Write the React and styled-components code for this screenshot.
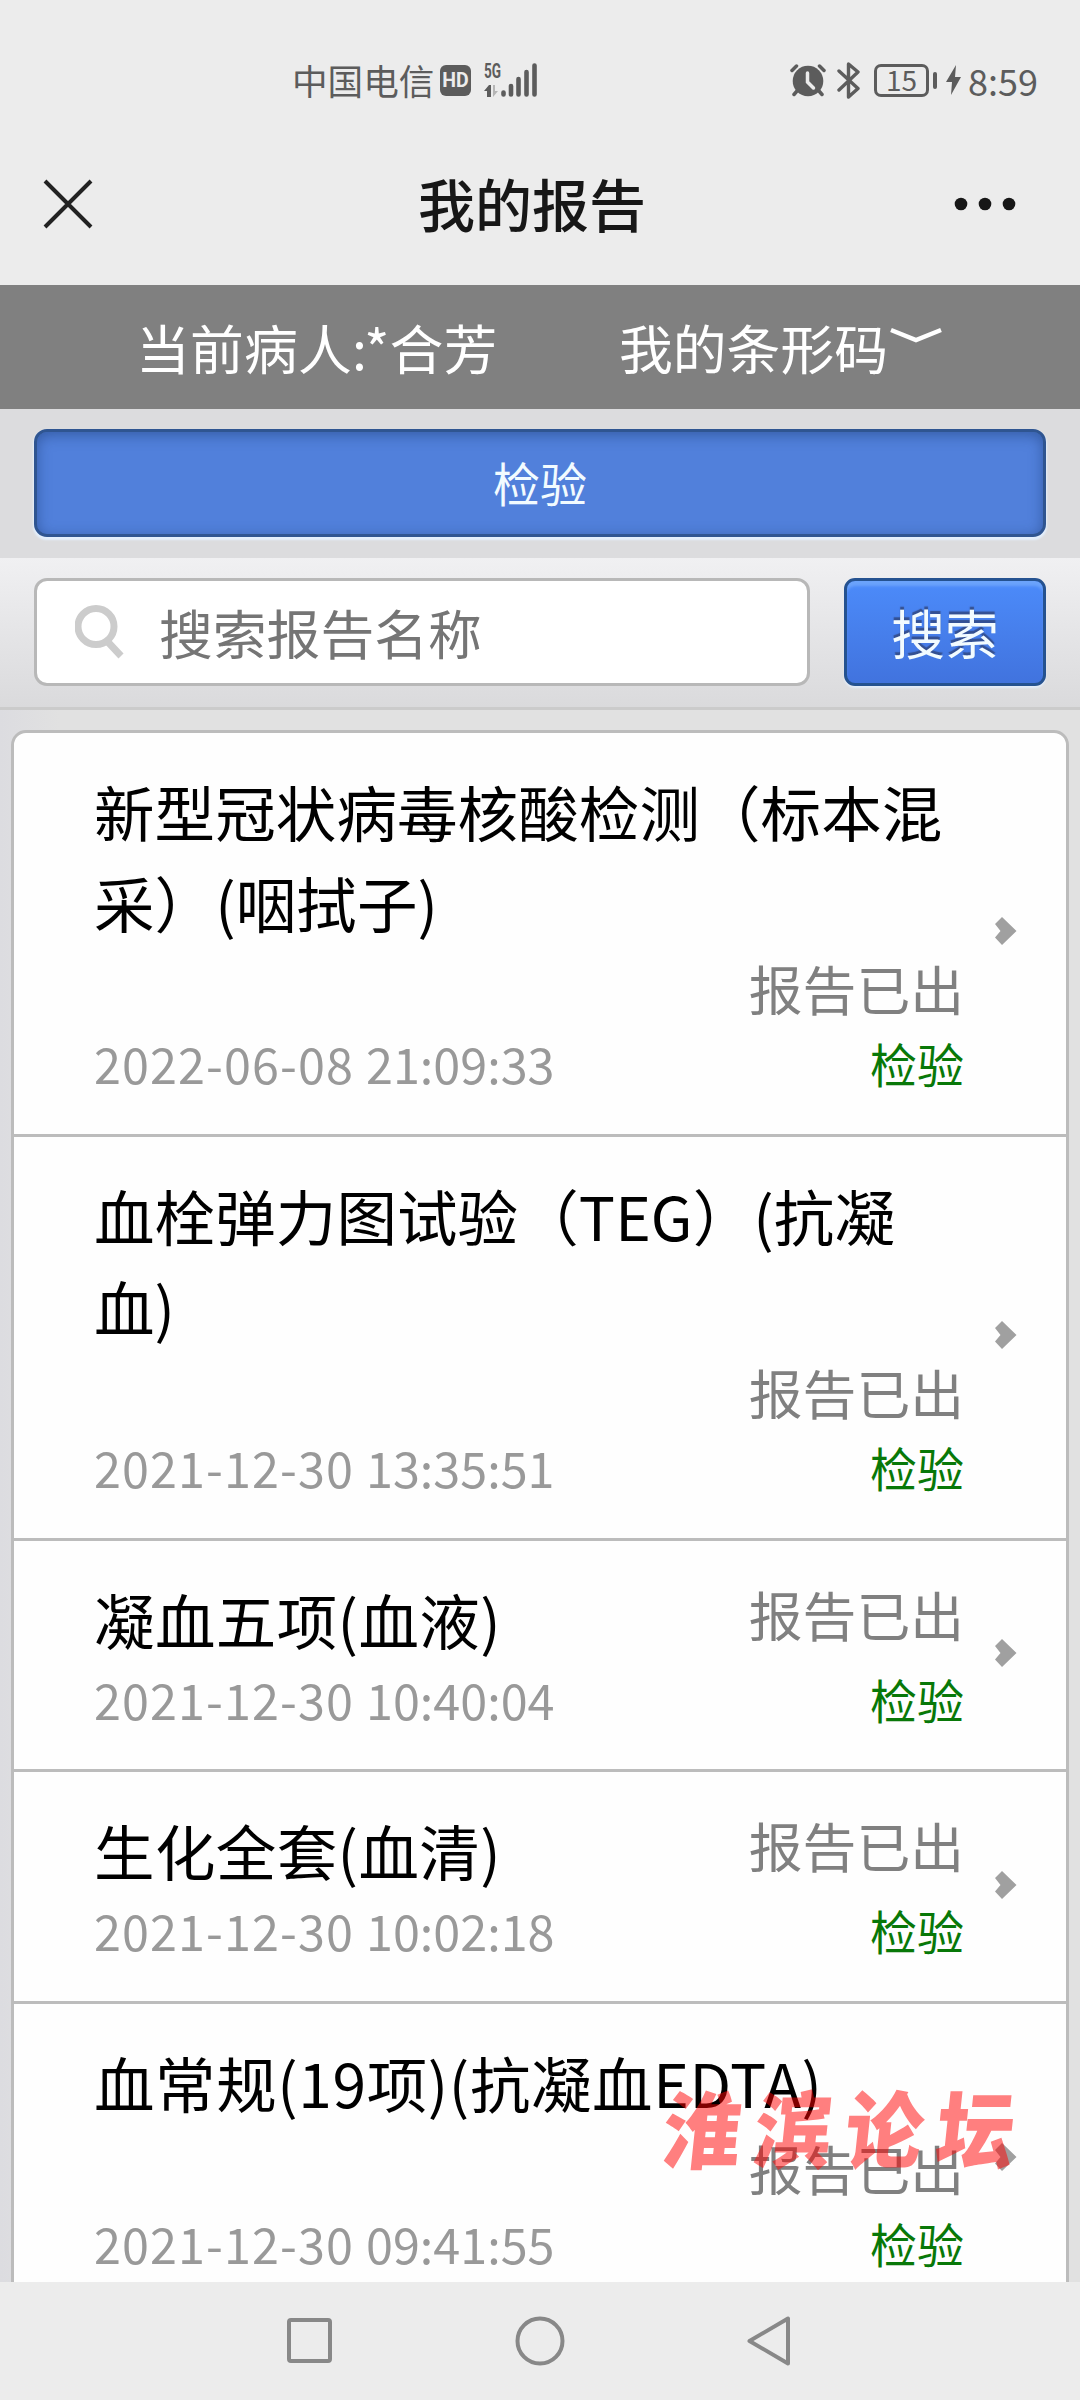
import React from 'react'
import styled, { createGlobalStyle } from 'styled-components'

const GlobalStyle = createGlobalStyle`
  * {
    box-sizing: border-box;
  }

  body {
    margin: 0;
    background: #ececec;
    font-family: 'Noto Sans CJK SC', sans-serif;
  }
`

const Screen = styled.div`
  position: relative;
  display: flex;
  flex-direction: column;
  width: 1080px;
  height: 2400px;
  overflow: hidden;
  background: #ececec;
`

const StatusBar = styled.div`
  display: flex;
  justify-content: space-between;
  align-items: center;
  height: 122px;
  padding: 38px 42px 0 292px;
  color: #5c5c5c;
  font-size: 36px;
  line-height: 36px;
`

const StatusGroup = styled.div`
  display: flex;
  align-items: center;
`

const Carrier = styled.span`
  width: 148px;
  font-size: 35.6px;
  white-space: nowrap;
`

const HdBadge = styled.span`
  width: 31px;
  height: 31px;
  margin-right: 13px;
  border-radius: 6px;
  background: #5c5c5c;
  color: #ececec;
  font: 700 19.5px/32px Roboto, sans-serif;
  text-align: center;
`

const Network = styled.div`
  display: flex;
  flex-direction: column;
  justify-content: space-between;
  width: 17px;
  height: 34px;
`

const NetworkLabel = styled.span`
  font: 700 20px/16px Roboto, sans-serif;
  transform: scaleX(0.68);
  transform-origin: left;
`

const Battery = styled.div`
  width: 55px;
  height: 33px;
  margin-left: 13px;
  border: 3px solid #5c5c5c;
  border-radius: 7px;
  font-size: 28px;
  line-height: 25px;
  text-align: center;
`

const BatteryCap = styled.div`
  width: 4px;
  height: 17px;
  margin: 0 9px 0 4px;
  border-radius: 2px;
  background: #5c5c5c;
`

const Clock = styled.span`
  width: 70px;
  margin-left: 7px;
  white-space: nowrap;
`

const NavBar = styled.div`
  display: flex;
  justify-content: space-between;
  align-items: center;
  height: 163px;
  padding: 0 64px 0 43px;
`

const NavTitle = styled.h1`
  margin: 0 0 3px 17px;
  color: #171717;
  font-size: 57px;
  font-weight: 500;
  line-height: 84px;
`

const PatientBar = styled.div`
  display: flex;
  height: 124px;
  padding: 0 138px 0 136px;
  background: #808080;
  color: #fff;
  font-size: 53.8px;
  line-height: 124px;
  white-space: nowrap;
`

const Patient = styled.div`
  width: 485px;
  letter-spacing: 0.2px;
`

const Barcode = styled.div`
  display: flex;

  svg {
    margin: 42px 0 0 2px;
  }
`

const TabArea = styled.div`
  height: 149px;
  padding: 20px 34px;
  background: #dcdcde;
`

const TypeTab = styled.button`
  display: block;
  width: 100%;
  height: 108px;
  padding: 0 0 3px;
  border: 3px solid #2f5591;
  border-radius: 13px;
  background: #5180db;
  box-shadow: inset 0 3px 14px rgba(30, 62, 120, 0.55), 0 2px 2px 1px #e3effd;
  color: #f2fbff;
  font-family: inherit;
  font-size: 47px;
`

const SearchBar = styled.div`
  display: flex;
  gap: 34px;
  height: 152px;
  padding: 20px 34px 0;
  border-bottom: 3px solid #cbcbcb;
  background: linear-gradient(#f0f0f2, #dadadc);
`

const SearchBox = styled.div`
  display: flex;
  align-items: center;
  width: 776px;
  height: 108px;
  padding-left: 38px;
  border: 3px solid #b8b8b8;
  border-radius: 13px;
  background: #fff;
  color: #757575;
  font-size: 53.8px;
  line-height: 80px;

  svg {
    margin-right: 34px;
  }
`

const SearchButton = styled.button`
  width: 202px;
  height: 108px;
  padding: 0 0 1px;
  border: 3px solid #255290;
  border-radius: 11px;
  background: linear-gradient(#4c8bfa, #4173de);
  box-shadow: inset 0 6px 3px -1px #6ba3fb, 0 2px 2px #e3edfa;
  color: #f2fbff;
  font-family: inherit;
  font-size: 53.8px;
  text-shadow: 0 -3px 1px #345091;
`

const ReportArea = styled.main`
  flex: 1;
  min-height: 0;
  padding: 20px 11px 0;
  overflow: hidden;
  background: linear-gradient(to right, #dcdce0, #e1e1e1 60px);
`

const ReportList = styled.ul`
  margin: 0;
  padding: 0;
  border: 3px solid #bcbcbc;
  border-radius: 15px;
  background: #fefefe;
  list-style: none;
`

const ReportRow = styled.li`
  display: flex;
  align-items: center;
  padding: 32px 49px 35.3px 80px;
  border-bottom: 3px solid #bcbcbc;

  > svg {
    flex: none;
    margin: 0 0 1px 31px;
  }
`

const ReportBody = styled.div`
  width: 870px;
`

// The status drops under the name when both do not fit on one line
const ReportHead = styled.div`
  display: flex;
  flex-wrap: wrap;
  align-items: flex-start;
`

const ReportName = styled.h2`
  margin: 0;
  color: #000;
  font-size: 60.5px;
  font-weight: 400;
  line-height: 91px;
  letter-spacing: ${({ $tracking }) => $tracking || '0.1px'};
`

const ReportStatus = styled.span`
  margin-left: auto;
  color: #808080;
  font-size: 53.8px;
  line-height: 81px;
`

const ReportMeta = styled.div`
  display: flex;
  justify-content: space-between;
  height: 70.5px;
  line-height: 70.5px;
`

const ReportTime = styled.div`
  display: flex;
  gap: 12px;
  color: #999;
  font-size: 48.5px;
`

const DatePart = styled.span`
  letter-spacing: 1.1px;
`

const ReportType = styled.span`
  color: #087808;
  font-size: 47px;
`

const SystemNav = styled.div`
  display: flex;
  flex: none;
  justify-content: space-between;
  height: 118px;
  padding: 33px 288px 0 285px;
  background: #ececec;
`

const Watermark = styled.div`
  position: absolute;
  left: 664px;
  top: 2070px;
  color: rgba(255, 0, 0, 0.5);
  font-size: 78px;
  font-weight: 900;
  line-height: 110px;
  letter-spacing: 13px;
  white-space: nowrap;
  transform: skewX(-6deg) scaleY(1.08);
`

const reports = [
  { name: '新型冠状病毒核酸检测（标本混采）(咽拭子)', date: '2022-06-08', time: '21:09:33' },
  { name: '血栓弹力图试验（TEG）(抗凝血)', date: '2021-12-30', time: '13:35:51' },
  { name: '凝血五项(血液)', date: '2021-12-30', time: '10:40:04', tracking: '0.4px' },
  { name: '生化全套(血清)', date: '2021-12-30', time: '10:02:18', tracking: '0.4px' },
  { name: '血常规(19项)(抗凝血EDTA)', date: '2021-12-30', time: '09:41:55', tracking: '0.6px' }
]

const SignalBars = () => (
  <svg width="36" height="34" viewBox="0 0 36 34" stroke="#5c5c5c" strokeWidth="4.6" strokeLinecap="round">
    <path d="M2.5 29.5v2M10 23v8.5M17.5 16v15.5M25.5 9v22.5M33.5 2.5v29" />
  </svg>
)

const DataArrows = () => (
  <svg width="15" height="12" viewBox="0 0 15 12">
    <path d="M0 6L5 0h2v12H3V6z" fill="#5c5c5c" />
    <path d="M9 0h2v6h3l-5 6z" fill="#b5b5b5" />
  </svg>
)

const AlarmIcon = () => (
  <svg width="36" height="34" viewBox="0 0 36 34" fill="none" stroke="#5c5c5c" strokeWidth="3.5" strokeLinecap="round">
    <circle cx="18" cy="18" r="15.3" fill="#5c5c5c" stroke="none" />
    <path d="M2 7.5L6.5 3M34 7.5L29.5 3M7 28l-3 3.5M29 28l3 3.5" />
    <path d="M17.5 10v9l6 6" stroke="#ececec" />
  </svg>
)

const BluetoothIcon = () => (
  <svg width="24" height="37" viewBox="0 0 24 37" fill="none" stroke="#5c5c5c" strokeWidth="3.4" strokeLinejoin="round" strokeLinecap="round">
    <path d="M2 9l19 17.5-9.500 8.500V2l9.500 8L2 28" />
  </svg>
)

const Chevron = () => (
  <svg width="22" height="28" viewBox="0 0 22 28" fill="#a0a0a0">
    <path d="M7 0l14.500 14L7 28l-7-7.500L5.500 14 0 7z" />
  </svg>
)

function App() {
  return (
    <Screen>
      <GlobalStyle />
      <StatusBar>
        <StatusGroup>
          <Carrier>中国电信</Carrier>
          <HdBadge>HD</HdBadge>
          <Network>
            <NetworkLabel>5G</NetworkLabel>
            <DataArrows />
          </Network>
          <SignalBars />
        </StatusGroup>
        <StatusGroup>
          <AlarmIcon />
          <svg width="11" height="1" />
          <BluetoothIcon />
          <Battery>15</Battery>
          <BatteryCap />
          <svg width="15" height="30" viewBox="0 0 15 30" fill="#5c5c5c">
            <path d="M10 0L0 17h6L5 30l10-18H9z" />
          </svg>
          <Clock>8:59</Clock>
        </StatusGroup>
      </StatusBar>

      <NavBar>
        <svg width="50" height="50" viewBox="0 0 50 50" stroke="#222" strokeWidth="4">
          <path d="M2 2l46 46M48 2L2 48" />
        </svg>
        <NavTitle>我的报告</NavTitle>
        <svg width="62" height="14" viewBox="0 0 62 14" fill="#171717">
          <circle cx="7" cy="7" r="6.3" />
          <circle cx="31" cy="7" r="6.3" />
          <circle cx="55" cy="7" r="6.3" />
        </svg>
      </NavBar>

      <PatientBar>
        <Patient>当前病人:*合芳</Patient>
        <Barcode>
          我的条形码
          <svg width="52" height="17" viewBox="0 0 52 17" fill="none" stroke="#fff" strokeWidth="4.500">
            <path d="M1 3l25 10L51 3" />
          </svg>
        </Barcode>
      </PatientBar>

      <TabArea>
        <TypeTab>检验</TypeTab>
      </TabArea>

      <SearchBar>
        <SearchBox>
          <svg width="50" height="54" viewBox="0 0 50 54" fill="none" stroke="#ccc" strokeWidth="7">
            <circle cx="21" cy="21.5" r="18" />
            <path d="M32 36l14 15" />
          </svg>
          搜索报告名称
        </SearchBox>
        <SearchButton>搜索</SearchButton>
      </SearchBar>

      <ReportArea>
        <ReportList>
          {reports.map((report) => (
            <ReportRow key={report.date + report.time}>
              <ReportBody>
                <ReportHead>
                  <ReportName $tracking={report.tracking}>{report.name}</ReportName>
                  <ReportStatus>报告已出</ReportStatus>
                </ReportHead>
                <ReportMeta>
                  <ReportTime>
                    <DatePart>{report.date}</DatePart>
                    <span>{report.time}</span>
                  </ReportTime>
                  <ReportType>检验</ReportType>
                </ReportMeta>
              </ReportBody>
              <Chevron />
            </ReportRow>
          ))}
        </ReportList>
      </ReportArea>

      <SystemNav>
        <svg width="48" height="52" viewBox="0 0 48 52" fill="none" stroke="#888" strokeWidth="4">
          <rect x="4" y="5" width="41" height="41" rx="2" />
        </svg>
        <svg width="52" height="52" viewBox="0 0 52 52" fill="none" stroke="#888" strokeWidth="4">
          <circle cx="26" cy="26" r="22.5" />
        </svg>
        <svg width="46" height="52" viewBox="0 0 46 52" fill="none" stroke="#888" strokeWidth="4" strokeLinejoin="round">
          <path d="M42 3.5v45L3.500 26z" />
        </svg>
      </SystemNav>

      <Watermark>淮滨论坛</Watermark>
    </Screen>
  )
}

export default App
